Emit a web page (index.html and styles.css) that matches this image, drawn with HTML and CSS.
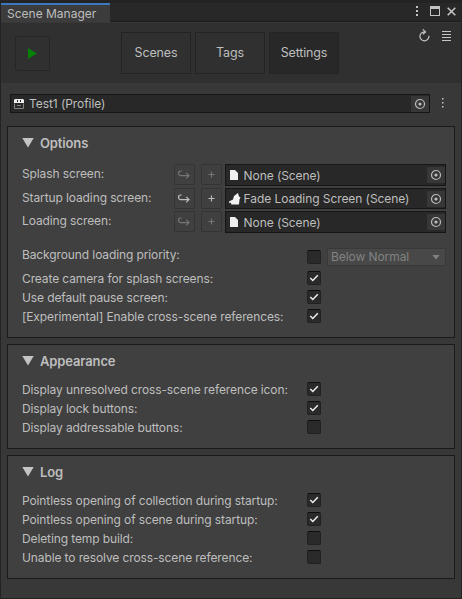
FILE: index.html
```
<!DOCTYPE html>
<html lang="en">
<head>
<meta charset="utf-8">
<title>Scene Manager</title>
<link rel="stylesheet" href="styles.css">
</head>
<body>
<svg class="defs" aria-hidden="true">
  <symbol id="target" viewBox="0 0 12 12"><circle cx="6" cy="6" r="4.5" fill="none" stroke="currentColor" stroke-width="1.2"/><circle cx="6" cy="6" r="1.6" fill="currentColor"/></symbol>
  <symbol id="redo" viewBox="0 0 12 10"><path d="M3.6 1H2.8a2.2 2.2 0 0 0 0 4.6H11M8.2 2.8L11 5.6L8.2 8.4" fill="none" stroke="currentColor" stroke-width="1.2"/></symbol>
  <symbol id="plus" viewBox="0 0 7 7"><path d="M3.5 .5v6M.5 3.5h6" stroke="currentColor" stroke-width="1.1"/></symbol>
  <symbol id="page" viewBox="0 0 8 10"><path d="M0 0h5l3 3v7H0z" fill="#eee"/></symbol>
  <symbol id="unity" viewBox="0 0 12 12"><path d="M9 0L5 3L4 6.5L0 8.5V10L1.500 9.500L2.500 11.500H10L10.500 6.500L11.500 4.500L10 3.500z" fill="#f2f2f2"/></symbol>
  <symbol id="check" viewBox="0 0 14 14"><path d="M3.3 7L5.8 9.5L10.8 4.3" fill="none" stroke="#eee" stroke-width="1.5"/></symbol>
</svg>
<div class="window">
  <header class="tabbar">
    <div class="tab">Scene Manager</div>
    <div class="controls">
      <svg width="3" height="11" viewBox="0 0 3 11"><path d="M0 0h2v2H0zM0 4h2v2H0zM0 8h2v2H0z" fill="#c4c4c4"/></svg>
      <svg width="10" height="10" viewBox="0 0 10 10"><path d="M0 0h10v10H0zM1 3v6h8V3z" fill="#c4c4c4" fill-rule="evenodd"/></svg>
      <svg width="9" height="9" viewBox="0 0 9 9"><path d="M.7 .7l7.6 7.6M8.3 .7L.7 8.3" stroke="#c4c4c4" stroke-width="1.6"/></svg>
    </div>
  </header>
  <nav class="toolbar">
    <button class="play"><svg width="9" height="11" viewBox="0 0 9 11"><path d="M0 0L9 5.5L0 11z" fill="#088008"/></svg></button>
    <button class="navbtn">Scenes</button>
    <button class="navbtn">Tags</button>
    <button class="navbtn active">Settings</button>
    <div class="tools">
      <svg width="11" height="13" viewBox="0 0 11 13"><path d="M5.5 2.8A4.5 4.5 0 1 0 9.9 6.8M3.8 .4L6.5 2.9L3.8 5.2" fill="none" stroke="#c4c4c4" stroke-width="1.2"/></svg>
      <svg width="9" height="10" viewBox="0 0 9 10"><path d="M0 .5h9M0 3.5h9M0 6.5h9M0 9.5h9" stroke="#c4c4c4"/></svg>
    </div>
  </nav>
  <main class="body">
    <div class="profile">
      <div class="field">
        <svg class="asset" width="10" height="10" viewBox="0 0 10 10"><path d="M1 0h8l1 1v3H0V1z" fill="#eee"/><path d="M3 1h1v2H3zM6 1h1v2H6z" fill="#282828"/><path d="M.5 4.500v5h9v-5M3 6.500h4" fill="none" stroke="#858585"/></svg>
        <span>Test1 (Profile)</span><i class="pick"><svg width="12" height="12"><use href="#target"/></svg></i>
      </div>
      <svg class="more" width="3" height="11" viewBox="0 0 3 11"><path d="M0 0h1.500v1.500H0zM0 4h1.500v1.500H0zM0 8h1.500v1.500H0z" fill="#c4c4c4"/></svg>
    </div>
    <section class="panel options">
      <h2><i class="fold"></i>Options</h2>
      <div class="scenes">
        <div class="scene first"><label>Splash screen:</label><button class="mini off"><svg width="12" height="10"><use href="#redo"/></svg></button><button class="mini off"><svg width="7" height="7"><use href="#plus"/></svg></button><div class="field"><svg class="asset" width="8" height="10"><use href="#page"/></svg><span>None (Scene)</span><i class="pick"><svg width="12" height="12"><use href="#target"/></svg></i></div></div>
        <div class="scene mid"><label>Startup loading screen:</label><button class="mini"><svg width="12" height="10"><use href="#redo"/></svg></button><button class="mini"><svg width="7" height="7"><use href="#plus"/></svg></button><div class="field"><svg class="asset" width="12" height="12"><use href="#unity"/></svg><span>Fade Loading Screen (Scene)</span><i class="pick"><svg width="12" height="12"><use href="#target"/></svg></i></div></div>
        <div class="scene last"><label>Loading screen:</label><button class="mini off"><svg width="12" height="10"><use href="#redo"/></svg></button><button class="mini off"><svg width="7" height="7"><use href="#plus"/></svg></button><div class="field"><svg class="asset" width="8" height="10"><use href="#page"/></svg><span>None (Scene)</span><i class="pick"><svg width="12" height="12"><use href="#target"/></svg></i></div></div>
      </div>
      <div class="row priority"><label>Background loading priority:</label><i class="box"></i><div class="select">Below Normal<i></i></div></div>
      <div class="row"><label>Create camera for splash screens:</label><i class="box"><svg><use href="#check"/></svg></i></div>
      <div class="row"><label>Use default pause screen:</label><i class="box"><svg><use href="#check"/></svg></i></div>
      <div class="row"><label>[Experimental] Enable cross-scene references:</label><i class="box"><svg><use href="#check"/></svg></i></div>
    </section>
    <section class="panel">
      <h2><i class="fold"></i>Appearance</h2>
      <div class="row"><label>Display unresolved cross-scene reference icon:</label><i class="box"><svg><use href="#check"/></svg></i></div>
      <div class="row"><label>Display lock buttons:</label><i class="box"><svg><use href="#check"/></svg></i></div>
      <div class="row"><label>Display addressable buttons:</label><i class="box"></i></div>
    </section>
    <section class="panel">
      <h2><i class="fold"></i>Log</h2>
      <div class="row"><label>Pointless opening of collection during startup:</label><i class="box"><svg><use href="#check"/></svg></i></div>
      <div class="row"><label>Pointless opening of scene during startup:</label><i class="box"><svg><use href="#check"/></svg></i></div>
      <div class="row"><label>Deleting temp build:</label><i class="box"></i></div>
      <div class="row"><label>Unable to resolve cross-scene reference:</label><i class="box"></i></div>
    </section>
  </main>
</div>
</body>
</html>
```
FILE: styles.css
```
* { box-sizing: border-box; }
body { margin: 0; height: 599px; padding: 3px 1px 1px; background: #232323; color: #bebebe; font: 12px/16px Inter, sans-serif; letter-spacing: -.07px; overflow: hidden; }
svg { display: block; flex: none; }
i { font-style: normal; }
button { font: inherit; letter-spacing: inherit; color: inherit; padding: 0; display: flex; align-items: center; justify-content: center; }
.defs { display: none; }
.window { height: 595px; background: #383838; display: flex; flex-direction: column; }
.tabbar { height: 19px; background: #282828; border-bottom: 1px solid #1c1c1c; display: flex; justify-content: space-between; }
.tab { width: 109px; height: 19px; padding-left: 6px; border-top: 2px solid #3a79bb; background: #3c3c3c; line-height: 18px; letter-spacing: 0; white-space: nowrap; }
.controls { display: flex; align-items: flex-start; padding: 3px 5px 0 0; }
.controls svg:nth-child(2) { margin: 0 7px 0 11px; }
.controls svg:nth-child(3) { margin-top: 1px; }
.toolbar { height: 61px; background: #303030; border-top: 1px solid #383838; display: flex; align-items: flex-start; padding: 9px 10px 0 14px; }
.play { width: 35px; height: 35px; margin: 4px 71px 0 0; background: #303030; border: 1px solid #262626; border-radius: 2px; }
.navbtn { width: 70px; height: 42px; margin-right: 4px; border: 1px solid #242424; background: #303030; font-size: 12.500px; letter-spacing: -.15px; }
.navbtn.active { background: #282828; }
.tools { margin: -3px 0 0 auto; display: flex; gap: 12px; align-items: center; }
.body { padding: 11px 6px 0; }
.profile { display: flex; align-items: center; padding-left: 3px; margin-bottom: 13px; }
.profile .field { width: 420px; height: 19px; }
.profile .field .asset { margin: 0 5px 0 3px; }
.more { margin-left: 12px; }
.field { display: flex; align-items: center; background: #282828; border: 1px solid #161616; height: 22px; width: 222px; white-space: nowrap; }
.scene .asset { margin-left: 4px; margin-right: 6px; }
.scene.mid .asset { margin: 0 3px; }
.first .field span, .last .field span { margin-top: 2px; }
.pick { width: 18px; height: 16px; margin-left: auto; background: #373737; display: flex; align-items: center; justify-content: center; }
.panel { border: 1px solid #1a1a1a; background: #404040; padding: 0 8px 11px 14px; margin-bottom: 6px; }
h2 { margin: 0 0 4px; height: 31px; display: flex; align-items: center; font-size: 13px; font-weight: 600; gap: 6px; letter-spacing: -.13px; }
.fold { width: 12px; height: 10px; background: #c4c4c4; clip-path: polygon(0 0, 100% 0, 50% 100%); }
.options h2 { margin-bottom: 6px; }
.scenes { display: flex; flex-direction: column; gap: 2px; margin-bottom: 14px; }
.scene { display: flex; align-items: flex-start; height: 22px; white-space: nowrap; }
.scene.mid { height: 21px; }
.mid .field { height: 21px; }
.scene label { width: 152px; margin-top: -2px; align-self: center; }
.mini { width: 21px; height: 21px; margin-right: 6px; background: #404040; border: 1px solid #343434; border-radius: 1px; }
.mini + .mini { margin-right: 3px; }
.mini.off svg { opacity: .42; }
.row { display: flex; align-items: center; height: 19px; padding-bottom: 1px; white-space: nowrap; }
.row label { width: 285px; margin-top: 2px; }
label { letter-spacing: -.11px; }
.box { width: 14px; height: 14px; background: #2a2a2a; border: 1px solid #212121; border-top-color: #0d0d0d; border-radius: 2px; }
.box svg { width: 14px; height: 14px; margin: -1px; }
.priority { height: 20px; margin-bottom: 2px; padding-bottom: 0; }
.priority label { margin-top: -4px; }
.select { width: 119px; height: 18px; margin-left: 6px; border: 1px solid #393939; background: #484848; color: #828282; display: flex; align-items: center; justify-content: space-between; padding: 0 5px 0 3px; }
.select i { width: 8px; height: 5px; background: #828282; clip-path: polygon(0 0, 100% 0, 50% 100%); }
```
